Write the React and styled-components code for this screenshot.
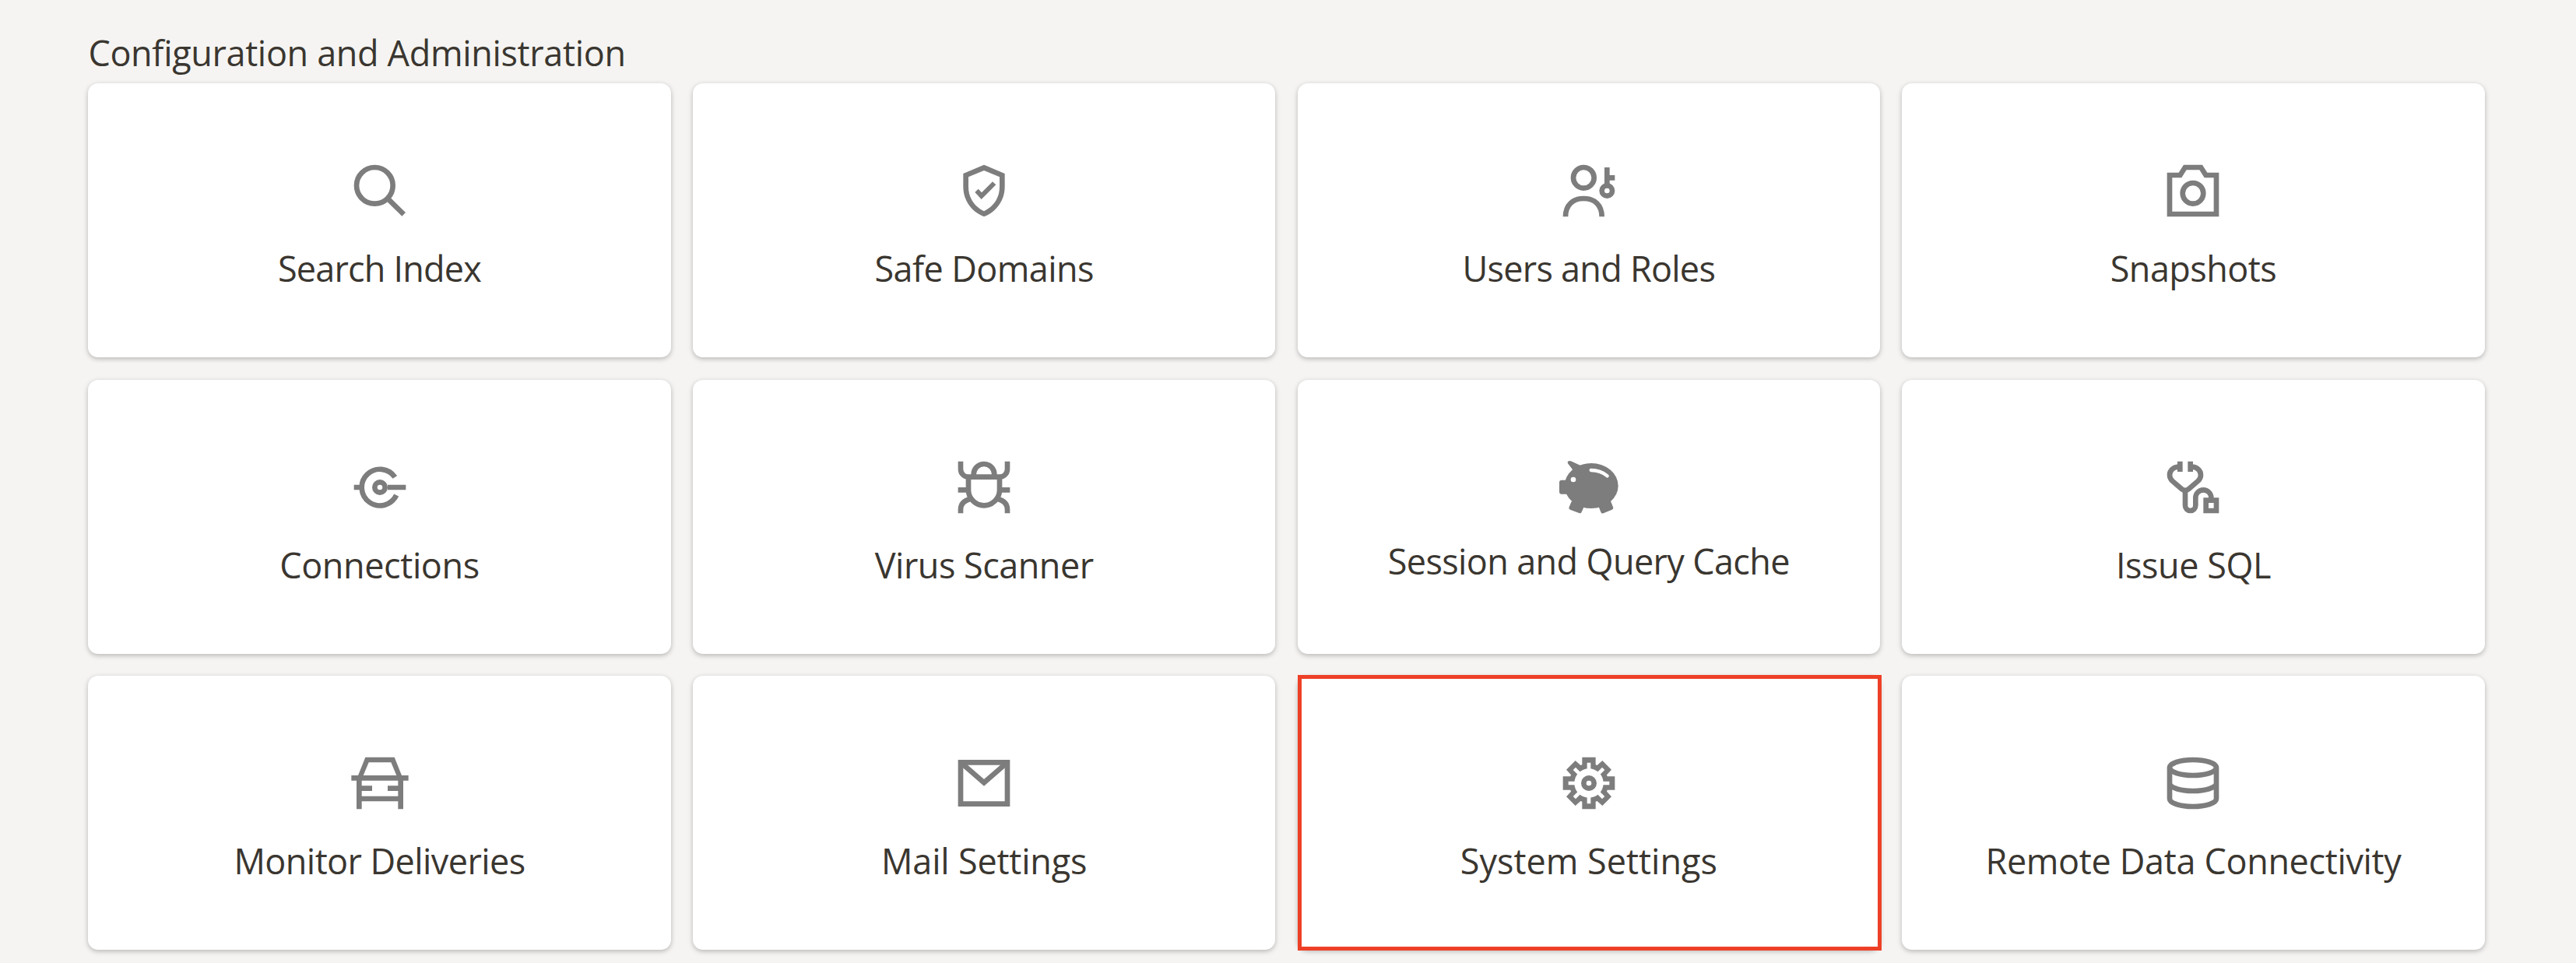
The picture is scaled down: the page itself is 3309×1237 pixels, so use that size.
import React from "react";
import styled, { createGlobalStyle } from "styled-components";

const GlobalStyle = createGlobalStyle`
  body {
    margin: 0;
    background: #f5f4f2;
    color: #3a3630;
    font-family: "Open Sans", "Noto Sans", sans-serif;
  }
`;

const Page = styled.main`
  box-sizing: border-box;
  height: 1237px;
  padding: 37.5px 117.4px 0 113.4px;
  overflow: hidden;
`;

const Heading = styled.h1`
  margin: 0 0 9.9px;
  font-size: 45px;
  line-height: 60px;
  font-weight: 400;
  letter-spacing: ${(p) => p.$tracking}px;
  white-space: nowrap;
`;

const Grid = styled.div`
  display: grid;
  grid-template-columns: repeat(4, 1fr);
  grid-auto-rows: 352px;
  gap: 28.4px;
`;

const Card = styled.a`
  position: relative;
  box-sizing: border-box;
  display: flex;
  flex-direction: column;
  align-items: center;
  padding-top: 98px;
  border-radius: 13px;
  background: #fff;
  box-shadow: 0 2px 6px rgba(0, 0, 0, 0.26);
`;

const Highlight = styled.span`
  position: absolute;
  inset: -1px -2px -1px 0;
  border: 5px solid #ee4027;
`;

const Icon = styled.svg`
  width: 80px;
  height: 80px;
  flex: none;
  fill: none;
  stroke: #7d7d7d;
  stroke-width: 2;

  .solid {
    fill: #7d7d7d;
    stroke: none;
  }
  .cut {
    stroke: #fff;
  }
  .hole {
    fill: #fff;
    stroke: none;
  }
`;

const Label = styled.span`
  margin-top: ${(p) => (p.$raised ? 25 : 30)}px;
  font-size: 45px;
  line-height: 60px;
  letter-spacing: ${(p) => p.$tracking}px;
  white-space: nowrap;
`;

const icons = {
  search: (
    <>
      <circle cx="10" cy="10" r="7" />
      <path d="M15 15l6.2 6.1" />
    </>
  ),
  shield: (
    <>
      <path
        className="solid"
        fillRule="evenodd"
        d="M12 2 20 5.4V10.5C20 15.5 17 20 12 22 7 20 4 15.5 4 10.5V5.4zM12 4.2 6 6.7V10.5C6 14.6 8.2 18 12 19.9 15.8 18 18 14.6 18 10.5V6.7z"
      />
      <path className="solid" d="M8.5 12.6 9.8 11.3 11.1 12.7 15.3 8.5 16.6 9.7 11 15.3z" />
    </>
  ),
  users: (
    <>
      <circle cx="10" cy="7" r="4" />
      <path d="M3 22C3 17.5 5.8 15 10 15s7 2.5 7 7" />
      <circle cx="19" cy="12" r="2" />
      <path d="M19 10.5V3M19.5 7H22" />
    </>
  ),
  camera: (
    <>
      <path
        className="solid"
        fillRule="evenodd"
        d="M2 5H6.5L8.4 2H15.6L17.5 5H22V22H2zM4 7V20H20V7H16.4L14.5 4H9.5L7.6 7z"
      />
      <circle cx="12" cy="13" r="4" />
    </>
  ),
  connections: (
    <>
      <path d="M17.8 8.1A7 7 0 1 0 18.35 15M2 12H4.5M15 12H22" />
      <circle cx="12" cy="12" r="2" />
    </>
  ),
  bug: (
    <path d="M8 8V7a4 4 0 0 1 8 0V8M3 2V5a3 3 0 0 0 3 3H18a3 3 0 0 0 3-3V2M6 8V13a6 6 0 0 0 12 0V8M2 13H6M18 13H22M3 22V20.5C3 18.4 4.5 17 6.8 16.4M21 22V20.5C21 18.4 19.5 17 17.2 16.4" />
  ),
  pig: (
    <>
      <ellipse className="solid" cx="12.95" cy="11.4" rx="10.35" ry="8.7" />
      <path
        className="solid"
        d="M1.5 9.2H4.5V14.6H1.5Q.6 14.6.6 13.7V10.1Q.6 9.2 1.5 9.2zM8.8 3.6 5.4 2Q4.3 1.6 3.9 2.1 3.6 2.5 4.3 3.3L5.9 5.4zM5.3 17.5 4.4 19.6Q4.1 20.3 4.8 20.6L8.2 21.9Q8.9 22.2 9.2 21.5L10.2 19.3 10 17zM15.7 19.3 16.6 21.5Q16.9 22.3 17.6 22L20.9 20.6Q21.6 20.3 21.3 19.6L20.4 17.3 16 17z"
      />
      <circle className="hole" cx="6" cy="9" r="1" />
      <path className="cut" strokeWidth="1.3" strokeLinecap="round" d="M12.8 5.4C15.4 5.4 17.2 6 19.1 7.6" />
    </>
  ),
  stethoscope: (
    <>
      <path d="M7 2V6M11 2V6M6.5 4.1C4.5 4.1 3 5.5 3 7.2 3 8.1 3.4 8.9 4 9.5L7.6 12.6Q9 13.8 10.4 12.6L14 9.5C14.6 8.9 15 8.1 15 7.2 15 5.5 13.5 4.1 11.5 4.1M9 13V19a2 2 0 0 0 4 0V16a3 3 0 0 1 6 0v.5" />
      <path d="M17 17H21V21H17z" />
    </>
  ),
  car: (
    <>
      <path
        className="solid"
        fillRule="evenodd"
        d="M3.4 9.5 6.4 2H17.6L20.6 9.5zM5.4 9.5H18.6L16.3 4H7.7z"
      />
      <path d="M1 10H23M4 10V22M20 10V22M5 14H9M15 14H19M4 18H20" />
    </>
  ),
  mail: (
    <>
      <path d="M3 4H21V20H3z" />
      <path d="M3 4l9 7.8L21 4" />
    </>
  ),
  gear: (
    <>
      <path
        className="solid"
        d="M9.4 2H14.6V4.9L15.2 5.1 17.2 3.3 20.7 6.8 18.9 8.8 19.1 9.4H22V14.6H19.1L18.9 15.2 20.7 17.2 17.2 20.7 15.2 18.9 14.6 19.1V22H9.4V19.1L8.8 18.9 6.8 20.7 3.3 17.2 5.1 15.2 4.9 14.6H2V9.4H4.9L5.1 8.8 3.3 6.8 6.8 3.3 8.8 5.1 9.4 4.9z"
      />
      <circle className="hole" cx="12" cy="12" r="5.6" />
      <path
        className="cut"
        strokeWidth="1.4"
        d="M12 4.1V19.9M4.1 12H19.9M6.4 6.4 17.6 17.6M17.6 6.4 6.4 17.6"
      />
      <circle cx="12" cy="12" r="2" fill="#fff" />
    </>
  ),
  database: (
    <>
      <ellipse cx="12" cy="6" rx="9" ry="3" />
      <path d="M3 6V18C3 19.66 7 21 12 21S21 19.66 21 18V6M3 12C3 13.66 7 15 12 15S21 13.66 21 12" />
    </>
  ),
};

const tiles = [
  { icon: "search", label: "Search Index", tracking: -0.8 },
  { icon: "shield", label: "Safe Domains", tracking: -0.6 },
  { icon: "users", label: "Users and Roles", tracking: -0.75 },
  { icon: "camera", label: "Snapshots", tracking: -0.55 },
  { icon: "connections", label: "Connections", tracking: -0.4 },
  { icon: "bug", label: "Virus Scanner", tracking: -0.5 },
  { icon: "pig", label: "Session and Query Cache", tracking: -0.63, raised: true },
  { icon: "stethoscope", label: "Issue SQL", tracking: -0.47 },
  { icon: "car", label: "Monitor Deliveries", tracking: -0.58 },
  { icon: "mail", label: "Mail Settings", tracking: -0.2 },
  { icon: "gear", label: "System Settings", tracking: 0, highlighted: true },
  { icon: "database", label: "Remote Data Connectivity", tracking: -0.35 },
];

export default function App() {
  return (
    <>
      <GlobalStyle />
      <Page>
        <Heading $tracking={-0.35}>Configuration and Administration</Heading>
        <Grid>
          {tiles.map((tile) => (
            <Card key={tile.label}>
              <Icon viewBox="0 0 24 24" aria-hidden="true">
                {icons[tile.icon]}
              </Icon>
              <Label $raised={tile.raised} $tracking={tile.tracking}>
                {tile.label}
              </Label>
              {tile.highlighted && <Highlight />}
            </Card>
          ))}
        </Grid>
      </Page>
    </>
  );
}
